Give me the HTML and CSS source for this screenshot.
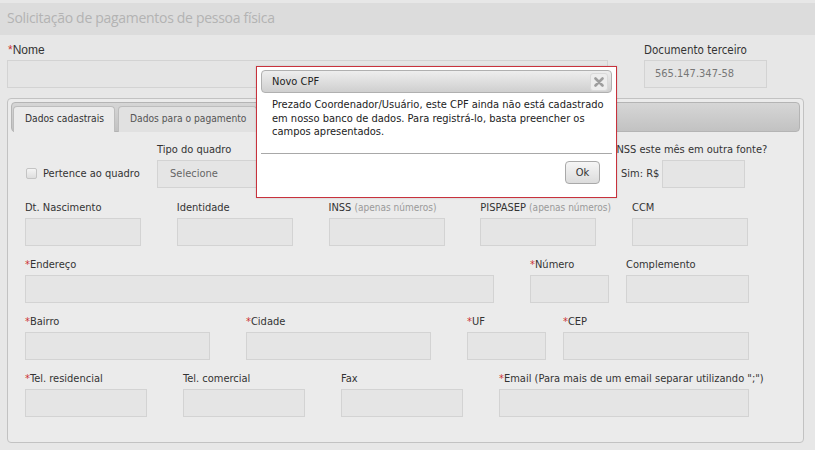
FILE: index.html
```html
<!DOCTYPE html>
<html lang="pt-BR">
<head>
<meta charset="utf-8">
<title>Solicitação de pagamentos de pessoa física</title>
<link rel="stylesheet" href="styles.css">
</head>
<body>
<header class="page-title">Solicitação de pagamentos de pessoa física</header>

<div class="top-row">
  <div class="field field-nome">
    <label class="lbl lbl-arial"><span class="req">*</span>Nome</label>
    <div class="input"></div>
  </div>
  <div class="field field-doc">
    <label class="lbl">Documento terceiro</label>
    <div class="input input-value">565.147.347-58</div>
  </div>
</div>

<section class="panel">
  <nav class="tabbar">
    <div class="tab tab-active">Dados cadastrais</div>
    <div class="tab">Dados para o pagamento</div>
  </nav>

  <div class="content">
    <div class="row row-1">
      <div class="check-group">
        <span class="checkbox"></span>
        <span class="lbl">Pertence ao quadro</span>
      </div>
      <div class="field w-tipo">
        <label class="lbl">Tipo do quadro</label>
        <div class="input select">Selecione</div>
      </div>
      <div class="field inss-group">
        <label class="lbl lbl-inss">Recolheu INSS este mês em outra fonte?</label>
        <div class="sim-row">
          <span class="lbl">Sim: R$</span>
          <div class="input w-sim"></div>
        </div>
      </div>
    </div>

    <div class="row row-5col">
      <div class="field"><label class="lbl">Dt. Nascimento</label><div class="input"></div></div>
      <div class="field"><label class="lbl">Identidade</label><div class="input"></div></div>
      <div class="field"><label class="lbl">INSS <span class="hint">(apenas números)</span></label><div class="input"></div></div>
      <div class="field"><label class="lbl">PISPASEP <span class="hint">(apenas números)</span></label><div class="input"></div></div>
      <div class="field"><label class="lbl">CCM</label><div class="input"></div></div>
    </div>

    <div class="row">
      <div class="field w-469"><label class="lbl"><span class="req">*</span>Endereço</label><div class="input"></div></div>
      <div class="field w-79"><label class="lbl"><span class="req">*</span>Número</label><div class="input"></div></div>
      <div class="field w-123 gap-s"><label class="lbl">Complemento</label><div class="input"></div></div>
    </div>

    <div class="row">
      <div class="field w-185"><label class="lbl"><span class="req">*</span>Bairro</label><div class="input"></div></div>
      <div class="field w-185"><label class="lbl"><span class="req">*</span>Cidade</label><div class="input"></div></div>
      <div class="field w-79"><label class="lbl"><span class="req">*</span>UF</label><div class="input"></div></div>
      <div class="field w-186 gap-s"><label class="lbl"><span class="req">*</span>CEP</label><div class="input"></div></div>
    </div>

    <div class="row">
      <div class="field w-122"><label class="lbl"><span class="req">*</span>Tel. residencial</label><div class="input"></div></div>
      <div class="field w-122"><label class="lbl">Tel. comercial</label><div class="input"></div></div>
      <div class="field w-122"><label class="lbl">Fax</label><div class="input"></div></div>
      <div class="field w-250"><label class="lbl"><span class="req">*</span>Email (Para mais de um email separar utilizando ";")</label><div class="input"></div></div>
    </div>
  </div>
</section>

<div class="dialog">
  <div class="dialog-titlebar">
    <span class="dialog-title">Novo CPF</span>
    <span class="dialog-close">
      <svg width="10" height="10" viewBox="0 0 10 10"><path d="M1.5 1.5 L8.5 8.5 M8.5 1.5 L1.5 8.5" stroke="#9e9e9e" stroke-width="2.6" stroke-linecap="round"/></svg>
    </span>
  </div>
  <div class="dialog-body">Prezado Coordenador/Usuário, este CPF ainda não está cadastrado em nosso banco de dados. Para registrá-lo, basta preencher os campos apresentados.</div>
  <div class="dialog-buttons">
    <button class="btn">Ok</button>
  </div>
</div>
</body>
</html>
```

FILE: styles.css
```css
* { box-sizing: border-box; }

html, body {
  margin: 0;
  padding: 0;
}

body {
  width: 815px;
  height: 450px;
  overflow: hidden;
  background: #e7e7e7;
  font-family: "DejaVu Sans Condensed", "DejaVu Sans", sans-serif;
  font-stretch: condensed;
  font-size: 11px;
  color: #333;
  position: relative;
}

.page-title {
  height: 32px;
  margin-top: 3px;
  background: #dcdcdc;
  padding: 5px 0 0 7px;
  font-family: "Open Sans", "Liberation Sans", sans-serif;
  font-stretch: normal;
  font-size: 14px;
  letter-spacing: -0.3px;
  color: #b3b3b3;
}

.top-row {
  display: flex;
  padding: 8px 0 0 7px;
  gap: 36px;
}

.field {
  display: flex;
  flex-direction: column;
}

.lbl {
  display: block;
  height: 14px;
  line-height: 14px;
  margin-bottom: 3px;
  color: #333;
  white-space: nowrap;
}

.lbl-arial {
  font-family: "Liberation Sans", Arial, sans-serif;
  font-size: 12px;
  padding-left: 1px;
}

.lbl-inss { padding-left: 5px; }

.req { color: #cc3333; }

.hint {
  color: #9a9a9a;
  font-size: 10px;
}

.input {
  height: 28px;
  background: #e5e5e5;
  border: 1px solid #d3d3d3;
}

.input-value {
  color: #777;
  padding: 6px 0 0 10px;
  line-height: 14px;
}

.field-nome { width: 601px; }
.field-doc { width: 123px; }
.field-doc .lbl { font-size: 11.5px; }

.panel {
  margin: 10px 0 0 7px;
  width: 797px;
  height: 345px;
  border: 1px solid #c2c2c2;
  border-radius: 4px;
  background: #ebebeb;
  padding: 3px;
}

.tabbar {
  height: 30px;
  border: 1px solid #b4b4b4;
  border-radius: 4px;
  background: linear-gradient(#d6d6d6, #c2c2c2);
  display: flex;
  align-items: flex-end;
  padding-left: 1px;
  gap: 3px;
}

.tab {
  height: 26px;
  margin-bottom: -1px;
  padding: 6px 10px 0 11px;
  border: 1px solid #bdbdbd;
  border-bottom: none;
  border-radius: 4px 4px 0 0;
  background: #e1e1e1;
  color: #555;
  font-size: 10.2px;
}

.tab-active {
  background: #ebebeb;
  color: #333;
}

.content {
  padding: 11px 0 0 14px;
}

.row {
  display: flex;
  gap: 36px;
  margin-bottom: 12px;
}

.row-1 {
  gap: 0;
  margin-bottom: 13px;
}

.check-group {
  width: 132px;
  display: flex;
  align-items: center;
  padding-top: 16px;
}

.checkbox {
  width: 11px;
  height: 11px;
  margin: 0 6px 0 1px;
  border: 1px solid #c4c4c4;
  border-radius: 2px;
  background: linear-gradient(#f4f4f4, #dedede);
}

.check-group .lbl {
  margin: 0;
}

.w-tipo { width: 240px; }
.select {
  color: #666;
  padding: 6px 0 0 12px;
  line-height: 14px;
}

.inss-group {
  margin-left: 163px;
}

.sim-row {
  display: flex;
  align-items: center;
  padding-left: 61px;
  gap: 3px;
}

.sim-row .lbl { margin: 0; }

.w-sim { width: 83px; }

.row-5col {
  display: grid;
  grid-template-columns: repeat(5, 116px);
  column-gap: 35.75px;
}

.w-469 { width: 469px; }
.w-79 { width: 79px; }
.w-122 { width: 122px; }
.w-123 { width: 123px; }
.w-185 { width: 185px; }
.w-186 { width: 186px; }
.w-250 { width: 250px; }
.gap-s { margin-left: -19px; }

.dialog {
  position: absolute;
  left: 256px;
  top: 66px;
  width: 361px;
  height: 132px;
  background: #fff;
  border: 1px solid #c8323c;
  padding: 3px 4px 0 4px;
  box-shadow: 0 0 2px rgba(0,0,0,0.15);
}

.dialog-titlebar {
  height: 23px;
  border: 1px solid #b0b0b0;
  border-radius: 4px;
  background: linear-gradient(#eeeeee, #cfcfcf);
  display: flex;
  align-items: center;
  justify-content: space-between;
  padding: 0 3px 0 10px;
  color: #222;
}

.dialog-close {
  width: 18px;
  height: 18px;
  border: 1px solid #dadada;
  border-radius: 3px;
  background: #ededed;
  display: flex;
  align-items: center;
  justify-content: center;
}

.dialog-body {
  height: 61px;
  padding: 5px 0 0 11px;
  line-height: 13.5px;
  color: #222;
  border-bottom: 1px solid #a8a8a8;
}

.dialog-buttons {
  display: flex;
  justify-content: flex-end;
  padding: 7px 12px 0 0;
}

.btn {
  width: 35px;
  height: 23px;
  border: 1px solid #a9a9a9;
  border-radius: 4px;
  background: linear-gradient(#f6f6f6, #dcdcdc);
  font-family: "DejaVu Sans Condensed", "DejaVu Sans", sans-serif;
  font-stretch: condensed;
  font-size: 11px;
  color: #333;
  padding: 0;
}
```
